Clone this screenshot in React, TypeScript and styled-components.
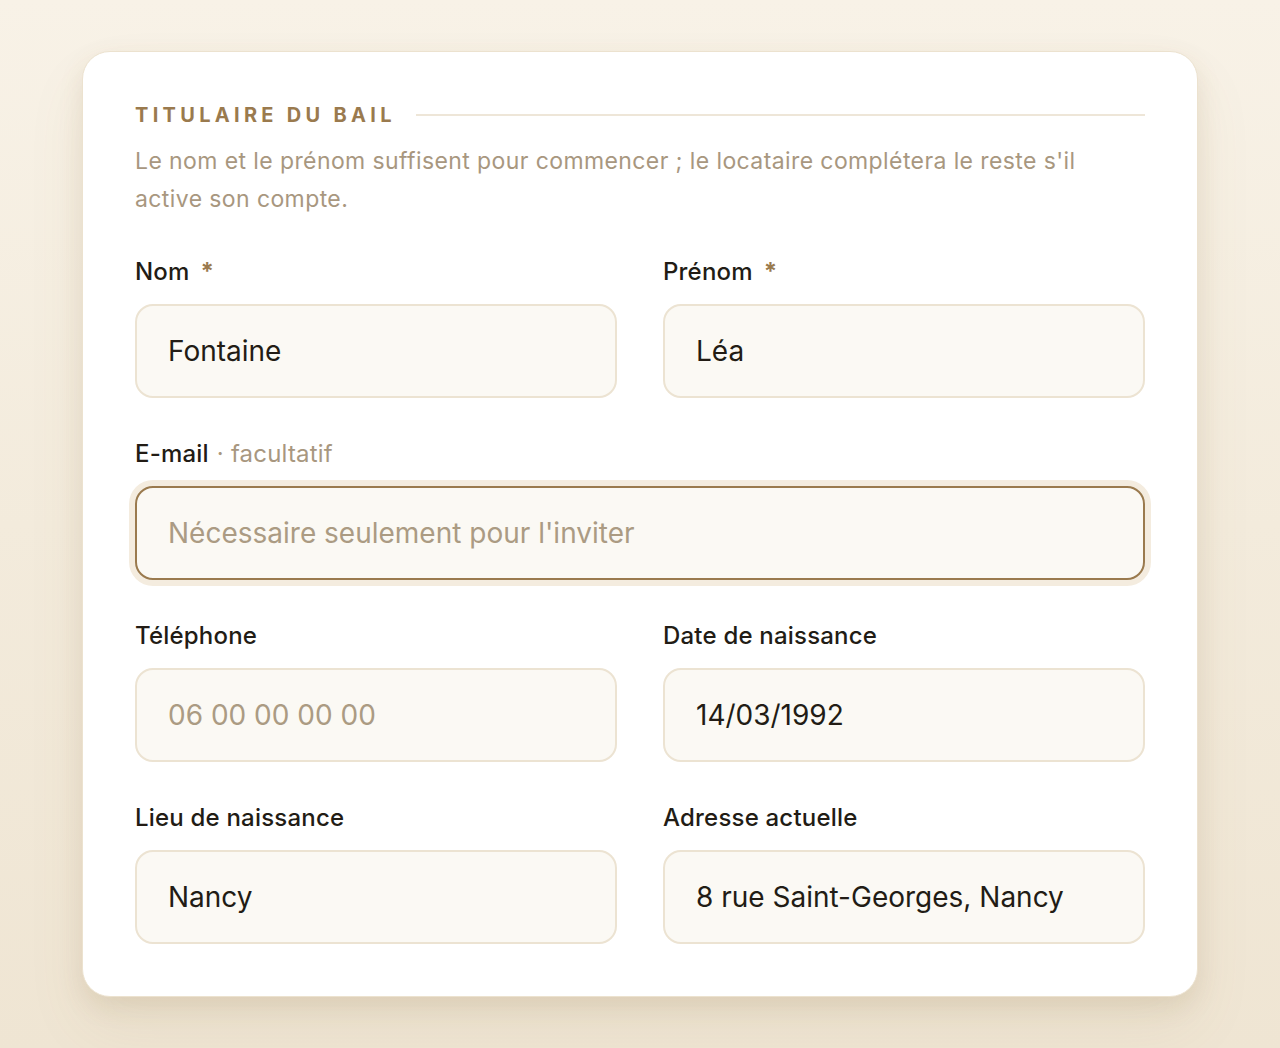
import React from "react"
import styled, { createGlobalStyle } from "styled-components"

const GlobalStyle = createGlobalStyle`
  html, body {
    margin: 0;
    padding: 0;
  }
  body {
    font-family: "Inter", "Lato", sans-serif;
    background: linear-gradient(180deg, #f8f2e7 0%, #f3ebdc 50%, #efe5d3 100%);
    min-height: 1048px;
  }
  * {
    box-sizing: border-box;
  }
`

const Page = styled.div`
	padding: 51px 82px 52px 82px;
	min-height: 1048px;
`

const Card = styled.section`
	background: #ffffff;
	border: 1px solid #ece2cf;
	border-radius: 28px;
	padding: 50px 52px 52px 52px;
	box-shadow: 0 10px 24px rgba(140, 110, 60, 0.13), 0 30px 60px rgba(140, 110, 60, 0.08);
`

const SectionHeader = styled.div`
	display: flex;
	align-items: center;
	gap: 20px;
	height: 26px;
`

const SectionTitle = styled.h2`
	margin: 0;
	font-size: 20px;
	font-weight: 700;
	letter-spacing: 4.3px;
	color: #9a7a4e;
	text-transform: uppercase;
	white-space: nowrap;
`

const Rule = styled.div`
	flex: 1;
	height: 2px;
	background: #eee6d8;
`

const Description = styled.p`
	margin: 14px 0 0 0;
	font-size: 23px;
	line-height: 38px;
	letter-spacing: 0.4px;
	color: #a8977f;
`

const Grid = styled.div`
	display: grid;
	grid-template-columns: 1fr 1fr;
	column-gap: 46px;
	row-gap: 41px;
	margin-top: 39px;
`

const Field = styled.label<{ $wide?: boolean }>`
	display: flex;
	flex-direction: column;
	gap: 17px;
	grid-column: ${({ $wide }) => ($wide ? "1 / -1" : "auto")};
`

const LabelText = styled.span`
	font-size: 24px;
	line-height: 30px;
	font-weight: 500;
	letter-spacing: 0.2px;
	color: #221c15;
`

const Required = styled.span`
	color: #9a7a4e;
	font-weight: 700;
	margin-left: 11px;
`

const Optional = styled.span`
	color: #a8977f;
	font-weight: 400;
	margin-left: 8px;
`

const Input = styled.input<{ $focused?: boolean }>`
	height: 94px;
	width: 100%;
	padding: 0 31px;
	border-radius: 18px;
	border: 2px solid ${({ $focused }) => ($focused ? "#9a7a4e" : "#ece3d2")};
	background: #fbf9f4;
	box-shadow: ${({ $focused }) => ($focused ? "0 0 0 6px #f4ecdf" : "none")};
	font-family: "Inter", "Lato", sans-serif;
	font-size: 28px;
	color: #221c15;
	outline: none;

	&::placeholder {
		color: #ab9b83;
	}
`

export default function App() {
	return (
		<Page>
			<GlobalStyle />
			<Card>
				<SectionHeader>
					<SectionTitle>Titulaire du bail</SectionTitle>
					<Rule />
				</SectionHeader>
				<Description>
					Le nom et le prénom suffisent pour commencer ; le locataire complétera le reste s'il active
					son compte.
				</Description>
				<Grid>
					<Field>
						<LabelText>
							Nom<Required>*</Required>
						</LabelText>
						<Input readOnly defaultValue="Fontaine" />
					</Field>
					<Field>
						<LabelText>
							Prénom<Required>*</Required>
						</LabelText>
						<Input readOnly defaultValue="Léa" />
					</Field>
					<Field $wide>
						<LabelText>
							E-mail<Optional>· facultatif</Optional>
						</LabelText>
						<Input $focused readOnly placeholder="Nécessaire seulement pour l'inviter" />
					</Field>
					<Field>
						<LabelText>Téléphone</LabelText>
						<Input readOnly placeholder="06 00 00 00 00" />
					</Field>
					<Field>
						<LabelText>Date de naissance</LabelText>
						<Input readOnly defaultValue="14/03/1992" />
					</Field>
					<Field>
						<LabelText>Lieu de naissance</LabelText>
						<Input readOnly defaultValue="Nancy" />
					</Field>
					<Field>
						<LabelText>Adresse actuelle</LabelText>
						<Input readOnly defaultValue="8 rue Saint-Georges, Nancy" />
					</Field>
				</Grid>
			</Card>
		</Page>
	)
}
